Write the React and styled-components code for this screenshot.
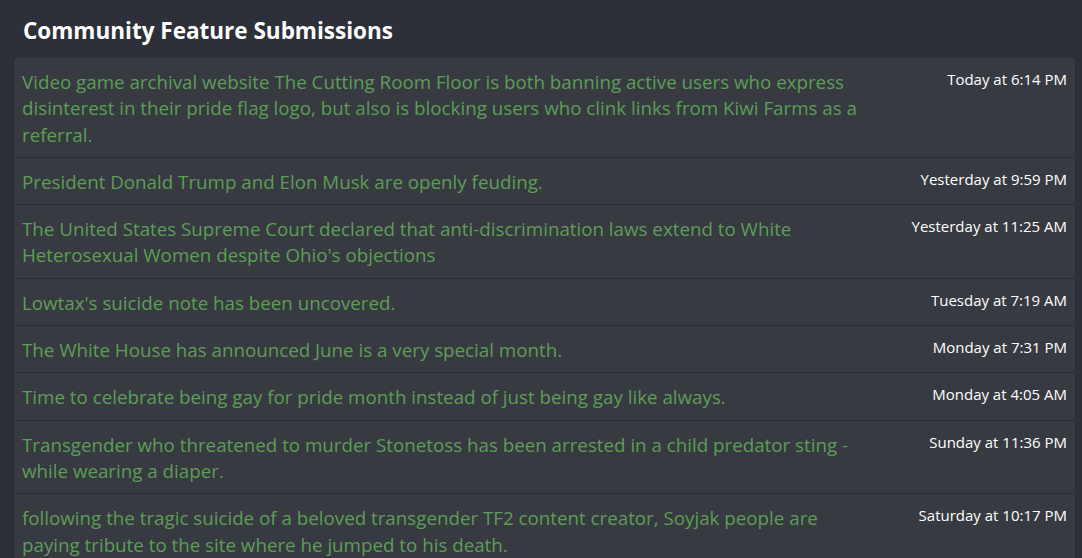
import React from 'react';
import styled, { createGlobalStyle } from 'styled-components';

const GlobalStyle = createGlobalStyle`
  html, body {
    margin: 0;
    background: #2d3038;
    font-family: "Open Sans", "Noto Sans", sans-serif;
  }
`;

const Page = styled.div`
  padding: 0 6px 0 13px;
`;

const Title = styled.h2`
  margin: 0;
  padding: 16px 0 0 10px;
  height: 41px;
  font-size: 22.5px;
  font-weight: 700;
  line-height: 30px;
  color: #ffffff;
`;

const List = styled.div`
  background: #383a42;
  border: 1px solid #2a2c32;
  border-radius: 3px;
`;

const Row = styled.div`
  display: flex;
  align-items: flex-start;
  padding: 11px 8px 9px 8px;
  border-top: 1px solid #2a2c32;

  &:first-child {
    border-top: none;
  }
`;

const Headline = styled.a`
  flex: 1;
  padding-right: 40px;
  font-size: 18.75px;
  line-height: 26.3px;
  color: #5c9e56;
  text-decoration: none;
`;

const Time = styled.span`
  flex: 0 0 155px;
  text-align: right;
  white-space: nowrap;
  font-size: 15px;
  line-height: 20px;
  color: #ffffff;
`;

const items = [
  ['Video game archival website The Cutting Room Floor is both banning active users who express disinterest in their pride flag logo, but also is blocking users who clink links from Kiwi Farms as a referral.', 'Today at 6:14 PM'],
  ['President Donald Trump and Elon Musk are openly feuding.', 'Yesterday at 9:59 PM'],
  ["The United States Supreme Court declared that anti-discrimination laws extend to White Heterosexual Women despite Ohio's objections", 'Yesterday at 11:25 AM'],
  ["Lowtax's suicide note has been uncovered.", 'Tuesday at 7:19 AM'],
  ['The White House has announced June is a very special month.', 'Monday at 7:31 PM'],
  ['Time to celebrate being gay for pride month instead of just being gay like always.', 'Monday at 4:05 AM'],
  ['Transgender who threatened to murder Stonetoss has been arrested in a child predator sting - while wearing a diaper.', 'Sunday at 11:36 PM'],
  ['following the tragic suicide of a beloved transgender TF2 content creator, Soyjak people are paying tribute to the site where he jumped to his death.', 'Saturday at 10:17 PM'],
];

const App = () => (
  <>
    <GlobalStyle />
    <Page>
      <Title>Community Feature Submissions</Title>
      <List>
        {items.map(([text, time]) => (
          <Row key={time}>
            <Headline href="#">{text}</Headline>
            <Time>{time}</Time>
          </Row>
        ))}
      </List>
    </Page>
  </>
);

export default App;
